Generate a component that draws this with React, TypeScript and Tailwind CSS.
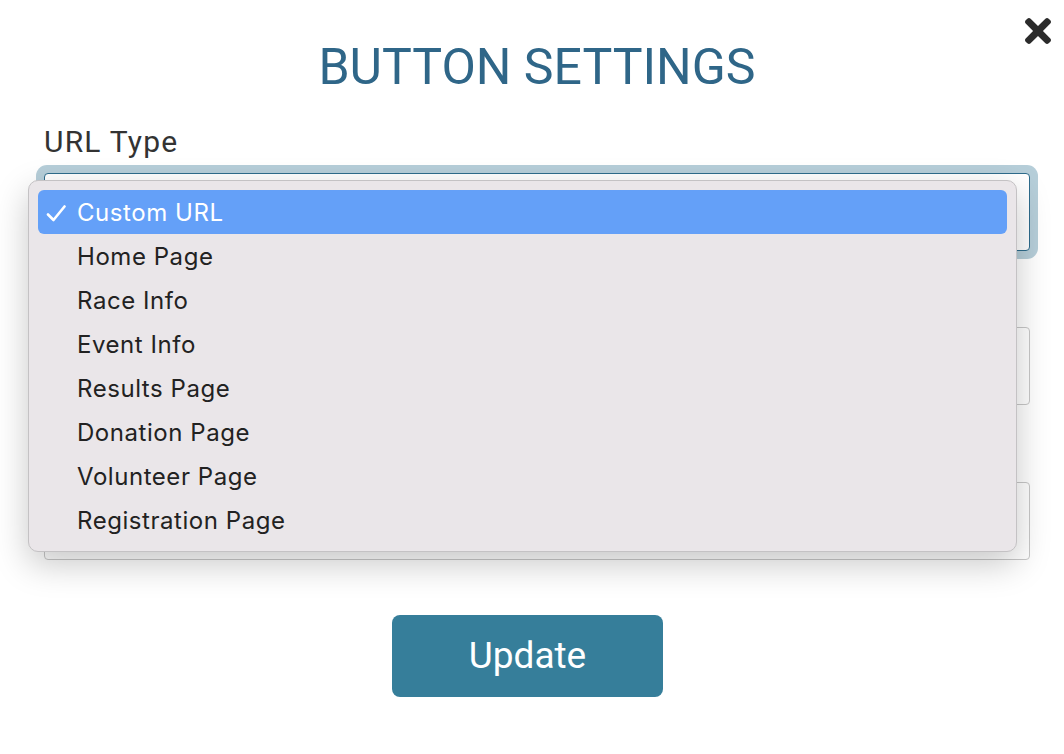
const urlTypes = [
  "Custom URL",
  "Home Page",
  "Race Info",
  "Event Info",
  "Results Page",
  "Donation Page",
  "Volunteer Page",
  "Registration Page",
];

function CloseIcon() {
  return (
    <svg viewBox="0 80 352 352" className="h-[26px] w-[26px]" fill="currentColor">
      <path d="M242.72 256l100.07-100.07c12.28-12.28 12.28-32.19 0-44.48l-22.24-22.24c-12.28-12.28-32.19-12.28-44.48 0L176 189.28 75.93 89.21c-12.28-12.28-32.19-12.28-44.48 0L9.21 111.450c-12.28 12.28-12.28 32.19 0 44.48L109.28 256 9.21 356.07c-12.28 12.28-12.28 32.19 0 44.48l22.24 22.24c12.28 12.28 32.2 12.28 44.48 0L176 322.72l100.07 100.07c12.28 12.28 32.2 12.28 44.48 0l22.24-22.24c12.28-12.28 12.28-32.19 0-44.48L242.72 256z" />
    </svg>
  );
}

function CheckIcon() {
  return (
    <svg viewBox="0 0 20 17" className="h-[17px] w-[20px]" fill="none" stroke="currentColor">
      <polyline points="2,9.5 7.5,15 18.5,1.5" strokeWidth="2.6" strokeLinecap="round" strokeLinejoin="round" />
    </svg>
  );
}

function UrlTypeMenu({ selected }: { selected: string }) {
  return (
    <ul className="absolute left-[28px] top-[180px] z-10 flex w-[989px] flex-col rounded-[10px] border border-[#c4c2c4] bg-[#eae6e9] p-[9px] shadow-[0_12px_34px_rgba(0,0,0,0.22)] font-['Inter',sans-serif] text-[24px] tracking-[0.55px] text-[#222]">
      {urlTypes.map((type) => {
        const isSelected = type === selected;
        return (
          <li
            key={type}
            className={
              isSelected
                ? "flex h-[44px] items-center gap-[11px] rounded-[6px] bg-[#64a0f8] pl-[8px] pt-[2px] text-white"
                : "flex h-[44px] items-center pl-[39px] pt-[2px]"
            }
          >
            {isSelected ? <CheckIcon /> : null}
            {type}
          </li>
        );
      })}
    </ul>
  );
}

export default function App() {
  return (
    <div className="relative min-h-screen bg-white pl-[44px] pr-[34px] font-['Roboto',sans-serif]">
      <button type="button" className="absolute right-[13px] top-[18px] text-[#2b2b2b]">
        <CloseIcon />
      </button>
      <h1 className="pt-[38px] text-center text-[50px] leading-[58px] text-[#2f6688]">
        BUTTON SETTINGS
      </h1>
      <form className="flex flex-col">
        <label className="mt-[28px] text-[30px] leading-[35px] tracking-[1.2px] text-[#333]">
          URL Type
        </label>
        <div className="mt-[14px] h-[78px] rounded-[4px] border border-[#2e6c8c] bg-white shadow-[0_0_0_8px_#b6ced9]" />
        <div className="mt-[76px] h-[78px] rounded-[4px] border border-[#c8c8c8] bg-white" />
        <div className="mt-[77px] h-[78px] rounded-[4px] border border-[#c8c8c8] bg-white" />
        <div className="mt-[55px] flex pl-[348px]">
          <button
            type="button"
            className="flex h-[82px] w-[271px] items-center justify-center rounded-[8px] bg-[#367e9a] text-[37px] text-white"
          >
            Update
          </button>
        </div>
      </form>
      <UrlTypeMenu selected="Custom URL" />
    </div>
  );
}
